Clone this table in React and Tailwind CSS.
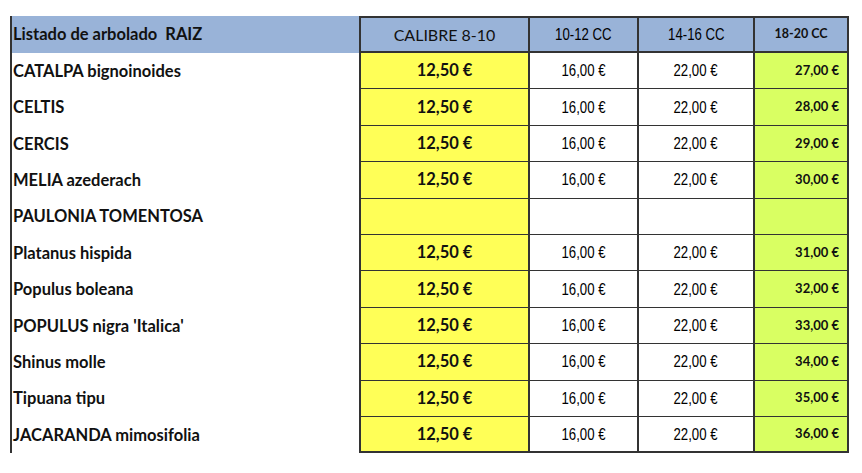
const rows = [
  ['CATALPA bignoinoides', '12,50 €', '16,00 €', '22,00 €', '27,00 €'],
  ['CELTIS', '12,50 €', '16,00 €', '22,00 €', '28,00 €'],
  ['CERCIS', '12,50 €', '16,00 €', '22,00 €', '29,00 €'],
  ['MELIA azederach', '12,50 €', '16,00 €', '22,00 €', '30,00 €'],
  ['PAULONIA TOMENTOSA', '', '', '', ''],
  ['Platanus hispida', '12,50 €', '16,00 €', '22,00 €', '31,00 €'],
  ['Populus boleana', '12,50 €', '16,00 €', '22,00 €', '32,00 €'],
  ["POPULUS nigra 'Italica'", '12,50 €', '16,00 €', '22,00 €', '33,00 €'],
  ['Shinus molle', '12,50 €', '16,00 €', '22,00 €', '34,00 €'],
  ['Tipuana tipu', '12,50 €', '16,00 €', '22,00 €', '35,00 €'],
  ['JACARANDA mimosifolia', '12,50 €', '16,00 €', '22,00 €', '36,00 €'],
];

export default function App() {
  return (
    <div className="w-[862px] h-[473px] bg-white pt-[16px] pl-[10px] text-[#111] font-[Lato,sans-serif]">
      <div className="grid grid-cols-[347px_169px_109px_116px_96px] border-l-2 border-[#333] w-[839px]">
        <div className="h-[37px] bg-[#99b3d8] flex items-center pl-[1px] text-[16.5px] font-bold">
          Listado de arbolado&nbsp; RAIZ
        </div>
        <div className="h-[37px] bg-[#99b3d8] border-l-2 border-t-2 border-b-2 border-[#333] flex items-center justify-center text-[16px]">
          CALIBRE 8-10
        </div>
        <div className="h-[37px] bg-[#99b3d8] border-l-2 border-t-2 border-b-2 border-[#333] flex items-center justify-center">
          <Narrow>10-12 CC</Narrow>
        </div>
        <div className="h-[37px] bg-[#99b3d8] border-l-2 border-t-2 border-b-2 border-[#333] flex items-center justify-center">
          <Narrow>14-16 CC</Narrow>
        </div>
        <div className="h-[37px] bg-[#99b3d8] border-l-2 border-r-2 border-t-2 border-b-2 border-[#333] flex items-center justify-center text-[12.5px] font-bold">
          18-20 CC
        </div>
        {rows.map((r, i) => (
          <Row key={i} r={r} last={i === rows.length - 1} />
        ))}
      </div>
    </div>
  );
}

function Narrow({ children }) {
  return (
    <span className="inline-block text-black [font-size:16.5px] [font-family:'Liberation_Sans',Arial,sans-serif] [transform:scaleX(0.8)]">
      {children}
    </span>
  );
}

function Row({ r, last }) {
  const b = last ? 'border-b-2' : 'border-b';
  return (
    <>
      <div className="h-[36.4px] flex items-center pl-[1px] text-[16.5px] font-bold">{r[0]}</div>
      <div className={`h-[36.4px] bg-[#ffff57] border-l-2 ${b} border-[#333] flex items-center justify-center text-[16.5px] font-bold`}>
        {r[1]}
      </div>
      <div className={`h-[36.4px] bg-white border-l-2 ${b} border-[#333] flex items-center justify-center`}>
        <Narrow>{r[2]}</Narrow>
      </div>
      <div className={`h-[36.4px] bg-white border-l-2 ${b} border-[#333] flex items-center justify-center`}>
        <Narrow>{r[3]}</Narrow>
      </div>
      <div className={`h-[36.4px] bg-[#d9ff62] border-l-2 border-r-2 ${b} border-[#333] flex items-center justify-end pr-[8px] text-[13px] font-bold`}>
        {r[4]}
      </div>
    </>
  );
}
